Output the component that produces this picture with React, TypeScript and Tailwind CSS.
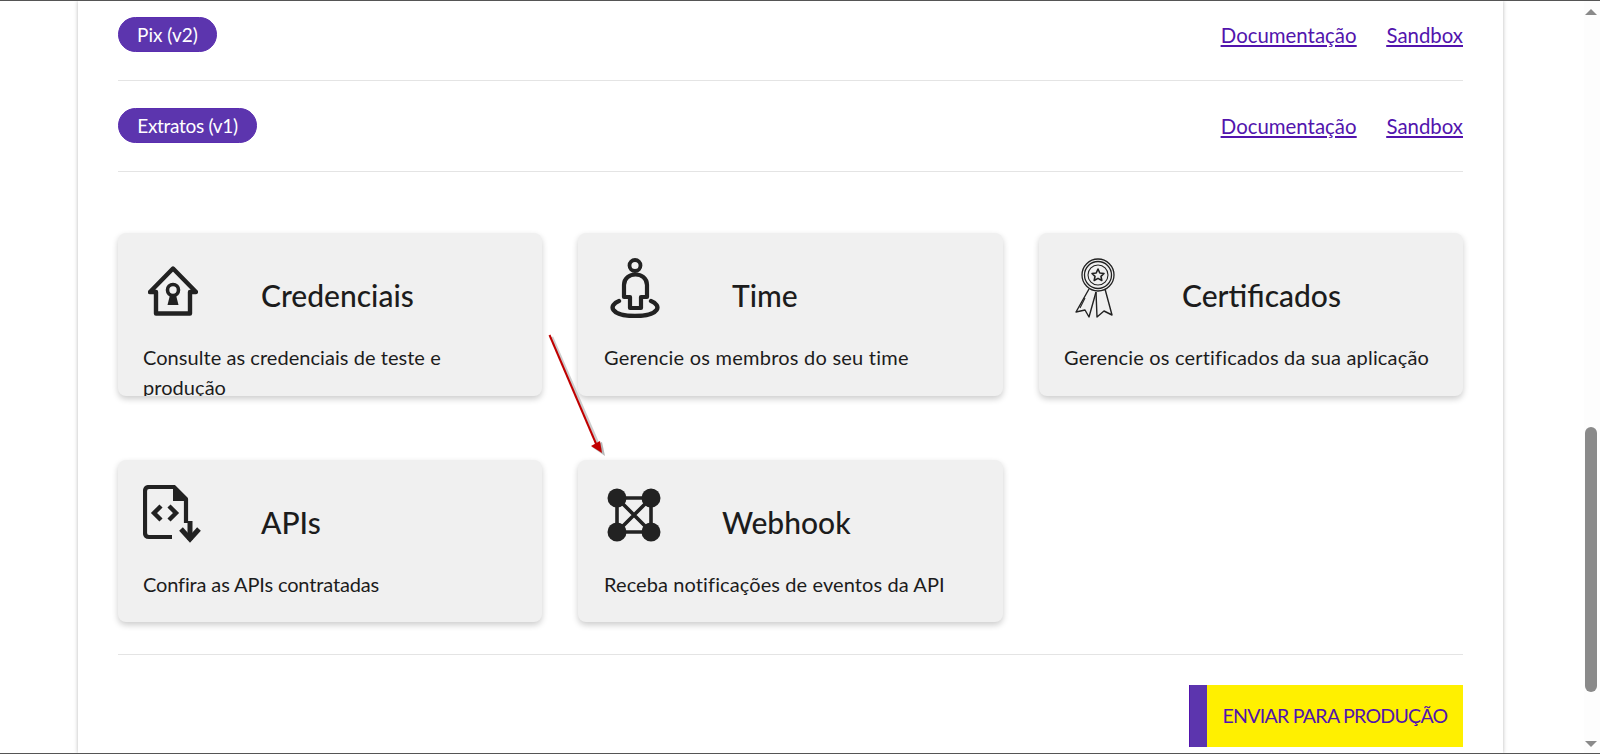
import React from "react";

const C = "#222222";

const HomeIcon = () => (
  <svg width="50" height="50" viewBox="0 0 50 50" fill="none" className="mt-[8px] ml-[5px] shrink-0">
    <path d="M2 26 L25 2.500 L48 26 H42 V47.500 H8 V26 Z" stroke={C} strokeWidth="4.400" strokeLinejoin="round" />
    <circle cx="25" cy="24" r="5.500" stroke={C} strokeWidth="3.600" />
    <path d="M22 29 H28 L30.500 39 H19.500 Z" fill={C} />
  </svg>
);

const TimeIcon = () => (
  <svg width="52" height="60" viewBox="0 0 52 60" fill="none" className="ml-[6px] shrink-0">
    <circle cx="26" cy="7.500" r="5.500" stroke={C} strokeWidth="3.800" />
    <path d="M15 39 V27 C15 13 38 13 38 27 V39 H32 V50 H21 V39 Z" stroke={C} strokeWidth="4.200" strokeLinejoin="round" />
    <path d="M10 43 C-1 47 1 58 26 58 C51 58 53 47 42 43" stroke={C} strokeWidth="4.400" strokeLinecap="round" />
  </svg>
);

const CertIcon = () => (
  <svg width="40" height="60" viewBox="0 0 40 60" fill="none" className="ml-[11px] shrink-0">
    <circle cx="23" cy="17" r="16" stroke={C} strokeWidth="1.300" />
    <circle cx="23" cy="17" r="13.500" stroke={C} strokeWidth="1.300" />
    <circle cx="23" cy="17" r="10" stroke={C} strokeWidth="1.100" />
    <path d="M23 11 L24.800 15 L29 15.500 L26 18.300 L26.800 22.500 L23 20.400 L19.200 22.500 L20 18.300 L17 15.500 L21.200 15 Z" stroke={C} strokeWidth="1.600" strokeLinejoin="round" />
    <path d="M14 31 L1 54 L10 52 L14 59 L21 34" stroke={C} strokeWidth="1.400" strokeLinejoin="round" />
    <path d="M10 40 L5 50" stroke={C} strokeWidth="1.100" />
    <path d="M21 34 L22 59 L29 53 L37 57 L30 31" stroke={C} strokeWidth="1.400" strokeLinejoin="round" />
  </svg>
);

const ApiIcon = () => (
  <svg width="60" height="58" viewBox="0 0 60 58" fill="none" className="shrink-0">
    <path d="M29 52 H6 Q2 52 2 48 V6 Q2 2 6 2 H31 L43 14 V38" stroke={C} strokeWidth="4.200" strokeLinejoin="round" />
    <path d="M30 2 L44 16 H30 Z" fill={C} />
    <path d="M18 21 L11 28 L18 35" stroke={C} strokeWidth="4.400" strokeLinejoin="miter" />
    <path d="M26 21 L33 28 L26 35" stroke={C} strokeWidth="4.400" strokeLinejoin="miter" />
    <path d="M47 36 V55" stroke={C} strokeWidth="5" />
    <path d="M38 44 L47 54 L56 44" stroke={C} strokeWidth="5" />
  </svg>
);

const HookIcon = () => (
  <svg width="54" height="54" viewBox="0 0 54 54" fill="none" className="mt-[3px] ml-[4px] shrink-0">
    <path d="M10 10 H44 V44 H10 Z M10 10 L44 44 M44 10 L10 44" stroke={C} strokeWidth="3.600" />
    <circle cx="10" cy="10" r="9.500" fill={C} />
    <circle cx="44" cy="10" r="9.500" fill={C} />
    <circle cx="10" cy="44" r="9.500" fill={C} />
    <circle cx="44" cy="44" r="9.500" fill={C} />
  </svg>
);

const Api = ({ name, first, pillClass }: { name: string; first?: boolean; pillClass: string }) => (
  <div className={first ? "flex items-start justify-between h-[64px] border-b border-[#e4e4e4]" : "flex items-start justify-between h-[91px] pt-[27px] border-b border-[#e4e4e4]"}>
    <span className={`${pillClass} h-[35px] text-center rounded-full bg-[#5c35ae] border border-[#5a2db0] text-white text-[19px] leading-[34px]`}>{name}</span>
    <div className="flex gap-[30px] pt-[1px] text-[20.4px] leading-[34px] text-[#5214ad] underline">
      <a>Documentação</a>
      <a>Sandbox</a>
    </div>
  </div>
);

const Card = ({ icon, title, titleClass, text, textClass }: { icon: React.ReactNode; title: string; titleClass: string; text: string; textClass: string }) => (
  <div className="h-full overflow-hidden rounded-[8px] bg-[#f0f0f0] pt-[25px] px-[25px] shadow-[0_3px_6px_rgba(0,0,0,0.2)]">
    <div className="flex items-start h-[84px]">
      {icon}
      <div className={`${titleClass} h-[75px] flex items-center text-[30px] font-medium text-[#1c1c1c]`}>{title}</div>
    </div>
    <p className={`${textClass} text-[20px] leading-[30px] text-[#1c1c1c]`}>{text}</p>
  </div>
);

export default function App() {
  return (
    <div className="relative flex h-[754px] overflow-hidden border-y border-[#555555] bg-white font-['Lato','Open_Sans',sans-serif]">
      <div className="flex-1 pl-[78px]">
        <main className="h-full w-[1425px] pl-[40px] pr-[40px] pt-[16px] bg-white shadow-[0_0_4px_rgba(0,0,0,0.28)]">
          <Api name="Pix (v2)" first pillClass="w-[99px]" />
          <Api name="Extratos (v1)" pillClass="w-[139px] tracking-[-0.3px]" />
          <div className="mt-[61px] grid grid-cols-[424px_425px_424px] grid-rows-[163px_162px] gap-x-[36px] gap-y-[64px]">
            <Card icon={<HomeIcon />} title="Credenciais" titleClass="ml-[63px]" textClass="tracking-[0.05px]" text="Consulte as credenciais de teste e produção" />
            <Card icon={<TimeIcon />} title="Time" titleClass="ml-[71px]" textClass="ml-[1px] tracking-[0.23px]" text="Gerencie os membros do seu time" />
            <Card icon={<CertIcon />} title="Certificados" titleClass="ml-[67px]" textClass="tracking-[0.18px]" text="Gerencie os certificados da sua aplicação" />
            <Card icon={<ApiIcon />} title="APIs" titleClass="ml-[58px]" textClass="-tracking-[0.14px]" text="Confira as APIs contratadas" />
            <Card icon={<HookIcon />} title="Webhook" titleClass="ml-[61px]" textClass="ml-[1px] tracking-[0.1px]" text="Receba notificações de eventos da API" />
          </div>
          <div className="mt-[32px] border-t border-[#e4e4e4] pt-[30px] flex justify-end">
            <button className="flex h-[62px] w-[274px] bg-[#fff000] text-[#5214ad] text-[19.5px] tracking-[-0.7px]">
              <span className="h-full w-[18px] bg-[#5c35ae] border-l border-[#5214ad]" />
              <span className="flex-1 text-center leading-[62px] whitespace-nowrap">ENVIAR PARA PRODUÇÃO</span>
            </button>
          </div>
        </main>
      </div>
      <div className="w-[16px] h-full pr-[3px] flex flex-col items-center bg-[#fdfdfd]">
        <div className="mt-[8px] w-0 h-0 border-x-[6px] border-x-transparent border-b-[6px] border-b-[#8a8a8a]" />
        <div className="mt-[412px] w-[12px] h-[265px] rounded-[6px] bg-[#8a8a8a]" />
        <div className="mt-[49px] w-0 h-0 border-x-[6px] border-x-transparent border-t-[6px] border-t-[#8a8a8a]" />
      </div>
      <svg className="absolute left-[540px] top-[325px] pointer-events-none" width="75" height="135" viewBox="0 0 75 135" fill="none">
        <path d="M12 11 L61 124" stroke="#999999" strokeWidth="2.500" opacity="0.5" />
        <path d="M52 121 L62 116 L65 130 Z" fill="#888888" opacity="0.6" />
        <path d="M9.500 9 L57 120" stroke="#c00000" strokeWidth="2" />
        <path d="M51 120 L60 115 L62 127 Z" fill="#c00000" />
      </svg>
    </div>
  );
}
